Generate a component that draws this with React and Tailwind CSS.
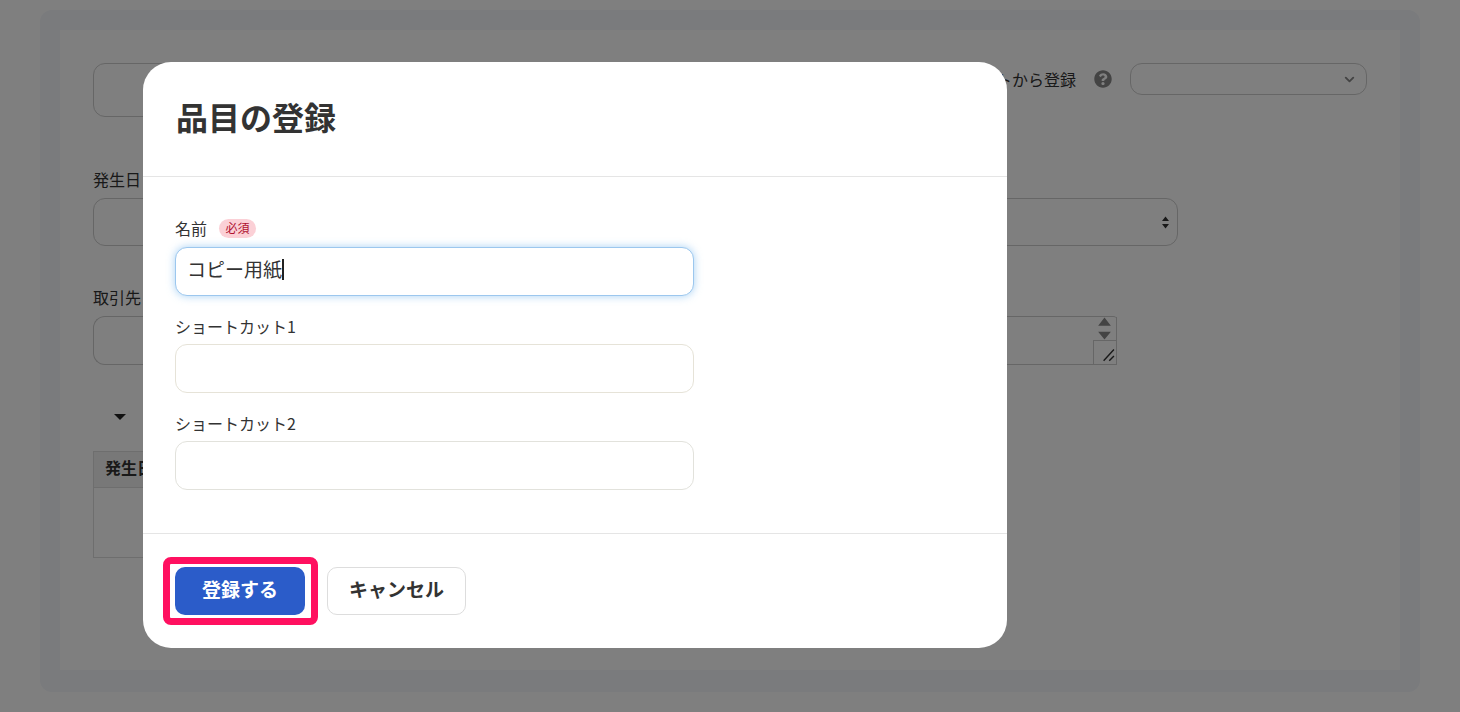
import React from 'react'
import { FaQuestionCircle } from 'react-icons/fa'
import { ChevronDown } from 'lucide-react'

const font = { jp: 'font-["Noto_Sans_CJK_JP","Liberation_Sans",sans-serif]' }

const ModalField = ({ label, required, children }) => (
  <div>
    <div className="flex h-[20px] items-center gap-[12px] text-base leading-5 text-[#333]">
      <span>{label}</span>
      {required && (
        <span className="flex h-[19px] w-[37px] items-center justify-center rounded-full bg-[#fbd0d6] text-xs text-[#b01030]">必須</span>
      )}
    </div>
    {children}
  </div>
)

const Background = () => (
  <div className="mx-[40px] mt-[10px] h-[682px] rounded-xl bg-[#f4f6fb] p-[20px]">
    <div className="h-[640px] bg-white px-[33px] pt-[33px] text-[#333]">
      {/* top row */}
      <div className="flex items-start justify-between">
        <div className="h-[54px] w-[200px] rounded-xl border border-[#ccc]" />
        <div className="flex h-[32px] items-center">
          <span className="text-base">ショートカットから登録</span>
          <FaQuestionCircle className="ml-[18px] text-[18px] text-[#888]" />
          <div className="ml-[18px] flex h-[32px] w-[237px] items-center justify-end rounded-xl border border-[#ccc] pr-[9px]">
            <ChevronDown size={15} strokeWidth={3} className="text-[#888]" />
          </div>
        </div>
      </div>

      <div className="mt-[52px] h-[20px] text-base leading-5">発生日</div>
      <div className="mt-[9px] flex h-[48px] w-[1085px] items-center justify-end rounded-xl border border-[#ccc] pr-[8px]">
        <svg width="7" height="13" viewBox="0 0 7 13" className="fill-[#333]">
          <path d="M3.5 0.5 7 5H0zM0 8h7l-3.5 4.5z" />
        </svg>
      </div>

      <div className="mt-[41px] h-[20px] text-base leading-5">取引先</div>
      <div className="mt-[9px] flex h-[49px] w-[1024px] justify-end rounded-l-xl rounded-tr-sm border border-r-0 border-[#ccc]">
        <div className="flex w-[24px] flex-col border-r border-[#ccc]">
          <svg width="24" height="24" viewBox="0 0 24 24" className="fill-[#888]">
            <path d="M11.5 0.5 18 9H5zM5 15h13l-6.5 8z" />
          </svg>
          <svg width="24" height="24" viewBox="0 0 24 24" className="border-t border-l border-[#ccc]">
            <path d="M10 21 21 9M16 21l5-5" stroke="#333" strokeWidth="1.5" fill="none" />
          </svg>
        </div>
      </div>

      <div className="mt-[49px] h-[10px] pl-[21px]">
        <div className="h-0 w-0 border-x-[6px] border-t-[6px] border-x-transparent border-t-[#222]" />
      </div>

      <div className="mt-[27px] w-[600px] border-x border-b border-[#ddd]">
        <div className="flex h-[37px] items-center border-y border-[#ddd] bg-[#f0f0f0] pb-[5px] pl-[11px] text-base font-bold">発生日</div>
        <div className="h-[69px]" />
      </div>
    </div>
  </div>
)

export default function App() {
  return (
    <div className={`relative h-[712px] overflow-hidden bg-white ${font.jp}`}>
      <Background />

      {/* modal over dimmed page */}
      <div className="absolute inset-0 bg-black/50 pl-[143px] pt-[62px]">
        <div className="h-[586px] w-[864px] rounded-[28px] bg-white text-[#333]">
          <div className="flex h-[115px] items-start border-b border-[#e5e5e5] pl-[33px] pt-[31px]">
            <h1 className="text-[32px] leading-[46px] font-bold">品目の登録</h1>
          </div>

          <div className="flex h-[357px] flex-col border-b border-[#e5e5e5] pl-[32px] pt-[41px]">
            <ModalField label="名前" required>
              <div className="mt-[9px] flex h-[49px] w-[519px] items-center rounded-xl border border-[#9cc7ee] bg-white pb-[5px] pl-[11px] text-[19px] shadow-[0_0_9px_rgba(130,190,240,0.7)]">
                <span>コピー用紙</span>
                <span className="h-[21px] w-[2px] bg-[#222]" />
              </div>
            </ModalField>
            <div className="mt-[20px]">
              <ModalField label="ショートカット1">
                <div className="mt-[8px] h-[49px] w-[519px] rounded-xl border border-[#e6e3d8]" />
              </ModalField>
            </div>
            <div className="mt-[20px]">
              <ModalField label="ショートカット2">
                <div className="mt-[8px] h-[49px] w-[519px] rounded-xl border border-[#e2e2dc]" />
              </ModalField>
            </div>
          </div>

          <div className="flex items-start pl-[20px] pt-[23px]">
            <div className="rounded-lg border-[7px] border-[#ff1060] bg-white py-[3px] pl-[5px] pr-[6px]">
              <button className="flex h-[48px] w-[130px] items-center justify-center rounded-[10px] bg-[#2b5cc9] pb-[3px] text-[19px] font-bold text-white">登録する</button>
            </div>
            <button className="ml-[9px] mt-[10px] flex h-[48px] w-[139px] items-center justify-center rounded-[10px] border border-[#ddd] bg-white pb-[3px] text-[19px] font-bold text-[#333]">キャンセル</button>
          </div>
        </div>
      </div>
    </div>
  )
}
